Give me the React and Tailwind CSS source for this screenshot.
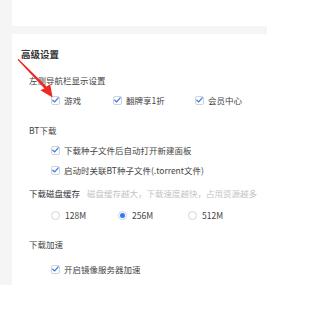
import React from "react";

const font = { fontFamily: '"Noto Sans CJK SC", "Noto Sans", sans-serif' };

const Check = () => (
  <span className="w-[9px] h-[9px] rounded-[2px] border border-[#cfd3da] bg-white flex items-center justify-center shrink-0">
    <svg width="7" height="6" viewBox="0 0 7 6">
      <path d="M0.8 3.2 L2.7 4.9 L6.2 0.9" fill="none" stroke="#3a7df0" strokeWidth="1.3" strokeLinecap="round" strokeLinejoin="round" />
    </svg>
  </span>
);

const Radio = ({ on }) => (
  <span className="w-[9px] h-[9px] rounded-full border border-[#cfd3da] bg-white flex items-center justify-center shrink-0">
    {on && <span className="w-[5px] h-[5px] rounded-full bg-[#2f7bf5]" />}
  </span>
);

const CheckItem = ({ label, w }) => (
  <div className={`flex items-center gap-[4px] ${w || ""}`}>
    <Check />
    <span className="text-[8.5px] leading-[12px] text-[#444]">{label}</span>
  </div>
);

const RadioItem = ({ label, on, w }) => (
  <div className={`flex items-center gap-[5px] ${w || ""}`}>
    <Radio on={on} />
    <span className="text-[8.5px] leading-[12px] text-[#444]">{label}</span>
  </div>
);

const Label = ({ children, mt }) => (
  <div className={`pl-[17px] h-[12px] flex items-center text-[8.5px] text-[#444] ${mt}`}>{children}</div>
);

export default function App() {
  return (
    <div className="relative w-[322px] h-[309px] bg-white overflow-hidden" style={font}>
      <div className="flex">
        <div className="w-[12px] h-[285px] bg-[#f5f5f5]" />
        <div className="w-[255px] flex flex-col">
          <div className="h-[26px] bg-white" />
          <div className="h-[8px] bg-[#f5f5f5]" />
          <div className="bg-white pt-[14px] pb-[10px]">
            <div className="pl-[9px] h-[12px] flex items-center text-[9.5px] font-semibold text-[#333]">高级设置</div>
            <Label mt="mt-[14px]">左侧导航栏显示设置</Label>
            <div className="pl-[39px] mt-[8px] h-[12px] flex items-center">
              <CheckItem label="游戏" w="w-[62px]" />
              <CheckItem label="翻牌享1折" w="w-[82px]" />
              <CheckItem label="会员中心" />
            </div>
            <Label mt="mt-[18px]">BT下载</Label>
            <div className="pl-[39px] mt-[8px] h-[12px] flex items-center">
              <CheckItem label="下载种子文件后自动打开新建面板" />
            </div>
            <div className="pl-[39px] mt-[8px] h-[12px] flex items-center">
              <CheckItem label="启动时关联BT种子文件(.torrent文件)" />
            </div>
            <div className="pl-[17px] mt-[11px] h-[12px] flex items-center gap-[7px] text-[8.5px]">
              <span className="text-[#333]">下载磁盘缓存</span>
              <span className="text-[#c4c4c4]">磁盘缓存越大，下载速度越快，占用资源越多</span>
            </div>
            <div className="pl-[39px] mt-[10px] h-[12px] flex items-center">
              <RadioItem label="128M" w="w-[67px]" />
              <RadioItem label="256M" on w="w-[70px]" />
              <RadioItem label="512M" />
            </div>
            <Label mt="mt-[17px]">下载加速</Label>
            <div className="pl-[39px] mt-[13px] h-[12px] flex items-center">
              <CheckItem label="开启镜像服务器加速" />
            </div>
          </div>
        </div>
      </div>
      <svg className="absolute left-0 top-0" width="322" height="309" viewBox="0 0 322 309">
        <path d="M17.5 59.8 L18.6 59 L46.6 86.4 L50.2 84.3 L52.6 97.6 L40.3 90.2 L44.4 88.5 Z" fill="#ee2a24" />
      </svg>
    </div>
  );
}
